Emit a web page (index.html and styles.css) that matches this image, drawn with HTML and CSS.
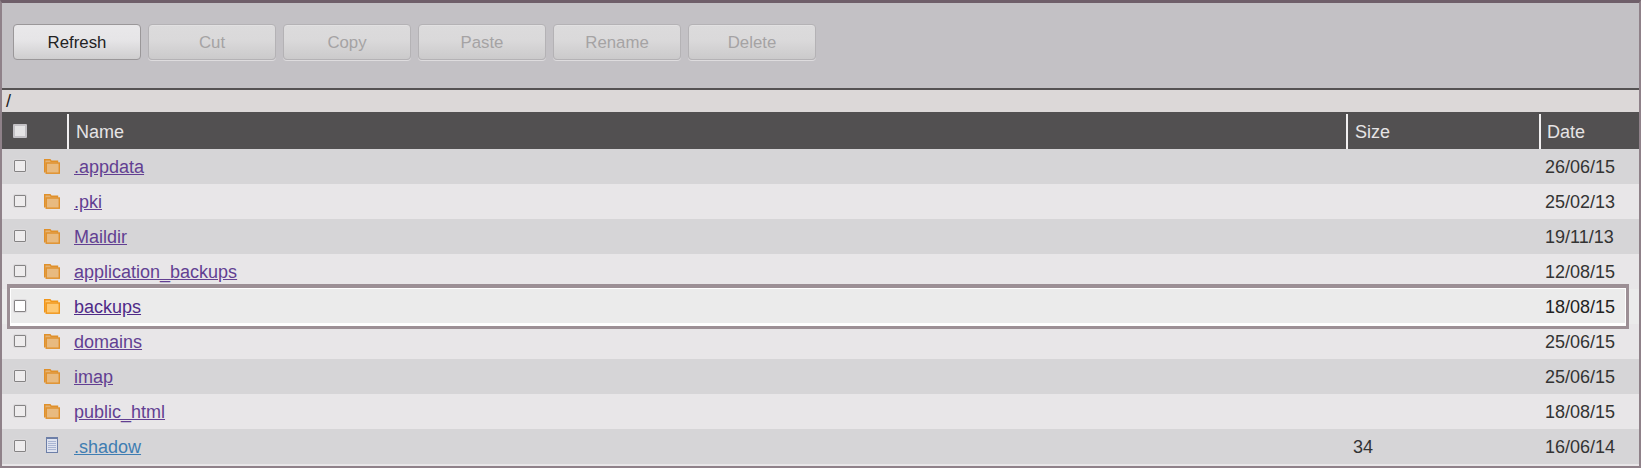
FILE: index.html
```html
<!DOCTYPE html>
<html lang="en">
<head>
<meta charset="utf-8">
<title>File manager</title>
<link rel="stylesheet" href="styles.css">
</head>
<body>
<svg class="defs" width="0" height="0" aria-hidden="true">
  <symbol id="folder" viewBox="0 0 16 15">
    <path d="M0.7 13.5V0.7h5.4l1 1.5H13.5v1.5" fill="#e4b376" stroke="#e0902a" stroke-width="1.4"/>
    <rect x="2.2" y="4" width="13.1" height="10.2" fill="#e8ba80" stroke="#e0902a" stroke-width="1.4"/>
  </symbol>
  <symbol id="folder-hi" viewBox="0 0 16 15">
    <path d="M0.7 13.5V0.7h5.4l1 1.5H13.5v1.5" fill="#fdc56f" stroke="#f0961a" stroke-width="1.4"/>
    <rect x="2.2" y="4" width="13.1" height="10.2" fill="#fdc873" stroke="#f0961a" stroke-width="1.4"/>
  </symbol>
  <symbol id="file" viewBox="0 0 12 16">
    <rect x="0.5" y="0.5" width="11" height="15" fill="#dfe3ef" stroke="#6d7fa8"/>
    <path d="M0 1h12" stroke="#6d7fa8" stroke-width="2"/>
    <path d="M2 4.5h8M2 6.5h8M2 8.5h8M2 10.5h8M2 12.5h8" stroke="#a9b5d3"/>
  </symbol>
</svg>
<main class="app">
  <div class="toolbar">
    <button class="btn" type="button">Refresh</button>
    <button class="btn" type="button" disabled>Cut</button>
    <button class="btn" type="button" disabled>Copy</button>
    <button class="btn" type="button" disabled>Paste</button>
    <button class="btn" type="button" disabled>Rename</button>
    <button class="btn" type="button" disabled>Delete</button>
  </div>
  <div class="path">/</div>
  <div class="list">
    <div class="row head">
      <span class="cell-check"><input class="check check-head" type="checkbox"></span>
      <span class="cell-icon"></span>
      <span class="cell-name">Name</span>
      <span class="cell-size">Size</span>
      <span class="cell-date">Date</span>
    </div>
    <div class="row">
      <span class="cell-check"><input class="check" type="checkbox"></span>
      <span class="cell-icon"><svg class="ico-folder"><use href="#folder"/></svg></span>
      <span class="cell-name"><a class="dir" href="#">.appdata</a></span>
      <span class="cell-size"></span>
      <span class="cell-date">26/06/15</span>
    </div>
    <div class="row">
      <span class="cell-check"><input class="check" type="checkbox"></span>
      <span class="cell-icon"><svg class="ico-folder"><use href="#folder"/></svg></span>
      <span class="cell-name"><a class="dir" href="#">.pki</a></span>
      <span class="cell-size"></span>
      <span class="cell-date">25/02/13</span>
    </div>
    <div class="row">
      <span class="cell-check"><input class="check" type="checkbox"></span>
      <span class="cell-icon"><svg class="ico-folder"><use href="#folder"/></svg></span>
      <span class="cell-name"><a class="dir" href="#">Maildir</a></span>
      <span class="cell-size"></span>
      <span class="cell-date">19/11/13</span>
    </div>
    <div class="row">
      <span class="cell-check"><input class="check" type="checkbox"></span>
      <span class="cell-icon"><svg class="ico-folder"><use href="#folder"/></svg></span>
      <span class="cell-name"><a class="dir" href="#">application_backups</a></span>
      <span class="cell-size"></span>
      <span class="cell-date">12/08/15</span>
    </div>
    <div class="row hi">
      <span class="cell-check"><input class="check" type="checkbox"></span>
      <span class="cell-icon"><svg class="ico-folder"><use href="#folder-hi"/></svg></span>
      <span class="cell-name"><a class="dir" href="#">backups</a></span>
      <span class="cell-size"></span>
      <span class="cell-date">18/08/15</span>
    </div>
    <div class="row">
      <span class="cell-check"><input class="check" type="checkbox"></span>
      <span class="cell-icon"><svg class="ico-folder"><use href="#folder"/></svg></span>
      <span class="cell-name"><a class="dir" href="#">domains</a></span>
      <span class="cell-size"></span>
      <span class="cell-date">25/06/15</span>
    </div>
    <div class="row">
      <span class="cell-check"><input class="check" type="checkbox"></span>
      <span class="cell-icon"><svg class="ico-folder"><use href="#folder"/></svg></span>
      <span class="cell-name"><a class="dir" href="#">imap</a></span>
      <span class="cell-size"></span>
      <span class="cell-date">25/06/15</span>
    </div>
    <div class="row">
      <span class="cell-check"><input class="check" type="checkbox"></span>
      <span class="cell-icon"><svg class="ico-folder"><use href="#folder"/></svg></span>
      <span class="cell-name"><a class="dir" href="#">public_html</a></span>
      <span class="cell-size"></span>
      <span class="cell-date">18/08/15</span>
    </div>
    <div class="row">
      <span class="cell-check"><input class="check" type="checkbox"></span>
      <span class="cell-icon"><svg class="ico-file"><use href="#file"/></svg></span>
      <span class="cell-name"><a class="doc" href="#">.shadow</a></span>
      <span class="cell-size">34</span>
      <span class="cell-date">16/06/14</span>
    </div>
  </div>
  <div class="callout"></div>
</main>
</body>
</html>
```
FILE: styles.css
```css
html, body { margin: 0; padding: 0; }
body {
  width: 1641px;
  height: 468px;
  overflow: hidden;
  font-family: "Liberation Sans", Arial, sans-serif;
  font-size: 18px;
  color: #333;
  background: #e8e6e8;
}
.defs { position: absolute; }
.app {
  position: relative;
  box-sizing: border-box;
  height: 468px;
  border: 2px solid #8f8189;
  border-top: 3px solid #6f5f6a;
}
.toolbar {
  box-sizing: border-box;
  height: 87px;
  display: flex;
  gap: 7px;
  padding: 21px 11px 0;
  background: #c3c1c5;
  border-bottom: 2px solid #555253;
}
.btn {
  box-sizing: border-box;
  width: 128px;
  height: 36px;
  padding: 2px 0 0;
  font: 16.8px "Liberation Sans", Arial, sans-serif;
  color: #222;
  border: 1px solid #9a9799;
  border-radius: 4px;
  background: linear-gradient(#e9e8ea 0%, #e6e5e7 45%, #cfcecf 100%);
}
.btn:disabled {
  color: #a5a3a4;
  border-color: #b4b2b5;
  background: linear-gradient(#dcdbdc 0%, #dad9da 45%, #cbcacb 100%);
  box-shadow: 0 1px 0 #dedcde, inset 0 1px 0 #e2e1e2;
}
.path {
  box-sizing: border-box;
  height: 22px;
  line-height: 22px;
  padding-left: 4px;
  font-size: 18px;
  color: #222;
  background: #dcd8d8;
}
.list { display: flex; flex-direction: column; }
.row {
  box-sizing: border-box;
  display: grid;
  grid-template-columns: 32px 33px 1279px 193px 1fr;
  align-items: center;
  height: 35px;
  padding-top: 2px;
  background: #d6d5d7;
}
.row:nth-child(odd) { background: #e8e6e8; }
.row.head {
  height: 37px;
  padding-top: 2px;
  background: #525051;
  color: #e6e4e5;
  align-items: stretch;
}
.row.hi { background: #ebebeb; color: #222; }
.head .cell-name, .head .cell-size, .head .cell-date {
  border-left: 2px solid #f2f0f1;
  padding: 8px 0 0 7px;
}
.head .cell-date { padding-left: 6px; }
.cell-check { display: flex; padding-left: 12px; align-items: center; }
.cell-icon { display: flex; align-items: center; padding-left: 9px; }
.cell-name { padding-left: 7px; }
.cell-size { padding-left: 7px; }
.cell-date { padding-left: 6px; }
.check {
  appearance: none;
  box-sizing: border-box;
  width: 12px;
  height: 12px;
  margin: 0 0 3px 0;
  border: 1px solid #858384;
  border-radius: 1px;
  background: #eeeced;
  box-shadow: 0 0 0 1px #dcdadc;
}
.hi .check { background: #fff; }
.check-head {
  width: 14px;
  height: 14px;
  margin: 0 0 1px -1px;
  border: 2px solid #c3c1c5;
  background: #e4e3e4;
  box-shadow: none;
}
.ico-folder { width: 16px; height: 15px; display: block; margin: 0 0 3px 1px; }
.ico-file { width: 12px; height: 16px; display: block; margin: 0 0 5px 3px; }
.dir { color: #623f92; }
.hi .dir { color: #4f2a88; }
.doc { color: #3f7db2; }
.callout {
  position: absolute;
  left: 5px;
  top: 281px;
  width: 1622px;
  height: 45px;
  box-sizing: border-box;
  border: 3px solid #9c8f95;
  border-top-width: 4px;
  box-shadow: inset 0 0 0 1px #fff, inset 0 -3px 0 #fff;
  pointer-events: none;
}
```
